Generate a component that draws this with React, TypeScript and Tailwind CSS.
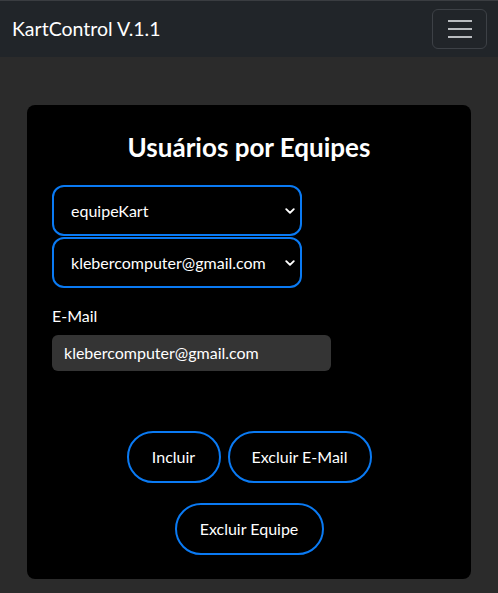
import React from "react";

const font = { fontFamily: '"Segoe UI", Lato, "Noto Sans", sans-serif' };

function Chevron() {
  return (
    <svg width="10" height="10" viewBox="0 0 16 16" fill="none" className="shrink-0">
      <path d="M2 5l6 6 6-6" stroke="#ffffff" strokeWidth="3" strokeLinecap="round" strokeLinejoin="round" />
    </svg>
  );
}

function Select({ value }: { value: string }) {
  return (
    <div className="flex items-center justify-between h-[51px] w-[250px] rounded-[12px] border-2 border-[#0a7af3] pl-[17px] pr-[5px] text-[16px] leading-[24px] text-white">
      <span>{value}</span>
      <Chevron />
    </div>
  );
}

function PillButton({ label, w }: { label: string; w: string }) {
  return (
    <button className={`h-[52px] ${w} rounded-full border-2 border-[#0a7af3] text-[16px] leading-[24px] text-white bg-black`}>
      {label}
    </button>
  );
}

export default function App() {
  return (
    <div className="min-h-[593px] bg-[#2b2b2b]" style={font}>
      {/* Navbar */}
      <nav className="h-[57px] bg-[#212529] border-t border-[#3a3d41] flex items-center justify-between pl-[12px] pr-[11px]">
        <span className="text-[19.5px] leading-[30px] text-white">KartControl V.1.1</span>
        <button className="w-[55px] h-[40px] rounded-[6px] border border-[#3d4146] flex flex-col items-center justify-center gap-[6px]">
          <span className="block w-[24px] h-[2px] bg-[#b9bcbf]" />
          <span className="block w-[24px] h-[2px] bg-[#b9bcbf]" />
          <span className="block w-[24px] h-[2px] bg-[#b9bcbf]" />
        </button>
      </nav>

      <div className="pt-[48px] px-[27px] pb-[14px]">
        <div className="bg-black rounded-[8px] h-[474px] px-[25px] pt-[26px]">
          <h1 className="text-center text-white font-bold text-[26px] leading-[32px]">Usuários por Equipes</h1>

          <div className="mt-[22px] flex flex-col gap-[1px]">
            <Select value="equipeKart" />
            <Select value="klebercomputer@gmail.com" />
          </div>

          <div className="mt-[16px] text-white text-[16px] leading-[24px]">E-Mail</div>
          <div className="mt-[7px] w-[279px] h-[36px] rounded-[6px] bg-[#343434] flex items-center pl-[12px] text-white text-[16px] leading-[24px]">
            klebercomputer@gmail.com
          </div>

          <div className="mt-[60px] flex justify-center gap-[7px]">
            <PillButton label="Incluir" w="w-[94px]" />
            <PillButton label="Excluir E-Mail" w="w-[144px]" />
          </div>
          <div className="mt-[20px] flex justify-center">
            <PillButton label="Excluir Equipe" w="w-[149px]" />
          </div>
        </div>
      </div>
    </div>
  );
}
